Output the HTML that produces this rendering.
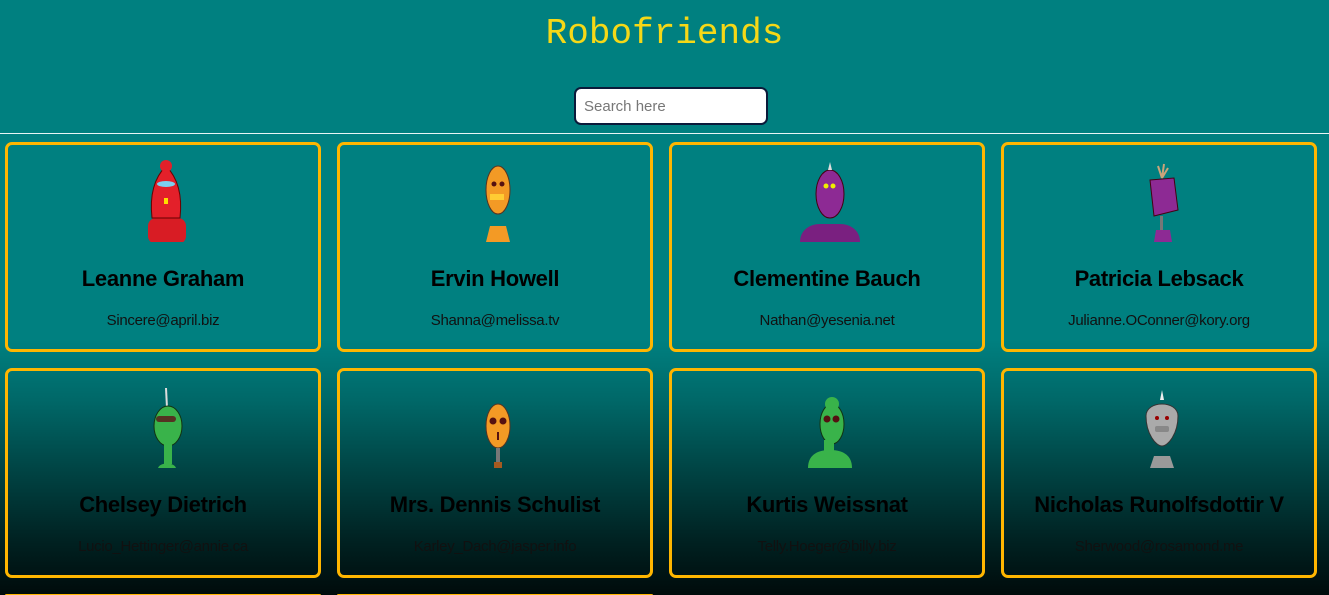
<!DOCTYPE html>
<html><head><meta charset="utf-8"><style>
*{box-sizing:border-box;margin:0;padding:0}
html,body{width:1329px;height:595px;overflow:hidden}
body{background:linear-gradient(to bottom,#008080 0,#008080 340px,#006868 400px,#004444 470px,#002222 540px,#000b0b 595px);font-family:"Liberation Sans",sans-serif;position:relative}
h1{position:absolute;top:13px;left:0;width:1329px;text-align:center;font-family:"Liberation Mono",monospace;font-weight:normal;font-size:36px;color:#f5d817;letter-spacing:0}
.search{position:absolute;left:574px;top:87px;width:194px;height:38px;background:#fff;border:2px solid #0b1a3a;border-radius:7px;font-size:15px;color:#777;padding:9px 8px}
.line{position:absolute;left:0;top:133px;width:1329px;height:1px;background:#e8f5f5}
.card{position:absolute;width:316px;height:210px;border:3px solid #ffb600;border-radius:7px;text-align:center}
.card svg{position:absolute;left:108px;top:15px}
.card .n{position:absolute;top:121px;left:0;width:100%;font-size:22px;font-weight:bold;color:#000;letter-spacing:-0.3px}
.card .e{position:absolute;top:167px;left:0;width:100%;font-size:15px;color:#111;letter-spacing:-0.3px}
</style></head><body>
<h1>Robofriends</h1>
<div class="search">Search here</div>
<div class="line"></div>

<div class="card" style="left:5px;top:142px"><svg width="100" height="82"><rect x="32" y="58" width="38" height="26" rx="8" fill="#d81c24"/><path d="M50 6 C36 20 34 40 36 58 L64 58 C66 40 64 20 50 6Z" fill="#e3202a" stroke="#600" /><circle cx="50" cy="6" r="6" fill="#e3202a"/><ellipse cx="50" cy="24" rx="9" ry="3" fill="#7cd0f0"/><rect x="48" y="38" width="4" height="6" fill="#fd0"/></svg><div class="n">Leanne Graham</div><div class="e">Sincere@april.biz</div></div>

<div class="card" style="left:337px;top:142px"><svg width="100" height="82"><ellipse cx="50" cy="30" rx="12" ry="24" fill="#f39a25" stroke="#532"/><circle cx="46" cy="24" r="2.5" fill="#511"/><circle cx="54" cy="24" r="2.5" fill="#511"/><rect x="42" y="34" width="14" height="6" fill="#fc3"/><path d="M38 82 L42 66 L58 66 L62 82Z" fill="#f39a25"/></svg><div class="n">Ervin Howell</div><div class="e">Shanna@melissa.tv</div></div>

<div class="card" style="left:669px;top:142px"><svg width="100" height="82"><path d="M20 82 C20 70 30 64 40 64 L60 64 C70 64 80 70 80 82Z" fill="#7a2080"/><ellipse cx="50" cy="34" rx="14" ry="24" fill="#8d2a94" stroke="#401"/><path d="M48 10 L50 2 L52 10Z" fill="#ddd"/><circle cx="46" cy="26" r="2.5" fill="#ee0"/><circle cx="53" cy="26" r="2.5" fill="#ee0"/></svg><div class="n">Clementine Bauch</div><div class="e">Nathan@yesenia.net</div></div>

<div class="card" style="left:1001px;top:142px"><svg width="100" height="82"><path d="M38 20 L62 18 L66 50 L42 56Z" fill="#8d2a94" stroke="#401"/><path d="M50 18 L46 6 M50 18 L52 4 M50 18 L56 8" stroke="#c9a47a" stroke-width="2"/><rect x="48" y="56" width="3" height="14" fill="#777"/><path d="M42 82 L44 70 L58 70 L60 82Z" fill="#8d2a94"/></svg><div class="n">Patricia Lebsack</div><div class="e">Julianne.OConner@kory.org</div></div>

<div class="card" style="left:5px;top:368px"><svg width="100" height="82"><path d="M50 2 L51 22" stroke="#ddd" stroke-width="2"/><ellipse cx="52" cy="40" rx="14" ry="20" fill="#39b34a" stroke="#131"/><rect x="40" y="30" width="20" height="6" rx="3" fill="#532"/><rect x="48" y="56" width="8" height="22" fill="#39b34a"/><path d="M42 82 C44 76 58 76 60 82Z" fill="#39b34a"/></svg><div class="n">Chelsey Dietrich</div><div class="e">Lucio_Hettinger@annie.ca</div></div>

<div class="card" style="left:337px;top:368px"><svg width="100" height="82"><ellipse cx="50" cy="40" rx="12" ry="22" fill="#f39a25" stroke="#532"/><circle cx="45" cy="35" r="3.5" fill="#511"/><circle cx="55" cy="35" r="3.5" fill="#511"/><rect x="49" y="46" width="2" height="8" fill="#511"/><rect x="48" y="62" width="4" height="14" fill="#777"/><rect x="46" y="76" width="8" height="6" fill="#a55a20"/></svg><div class="n">Mrs. Dennis Schulist</div><div class="e">Karley_Dach@jasper.info</div></div>

<div class="card" style="left:669px;top:368px"><svg width="100" height="82"><path d="M28 82 C28 70 36 64 50 64 C64 64 72 70 72 82Z" fill="#39b34a"/><ellipse cx="52" cy="38" rx="12" ry="20" fill="#39b34a" stroke="#131"/><circle cx="52" cy="18" r="7" fill="#39b34a"/><circle cx="47" cy="33" r="3.5" fill="#511"/><circle cx="56" cy="33" r="3.5" fill="#511"/><rect x="44" y="54" width="10" height="18" fill="#39b34a"/></svg><div class="n">Kurtis Weissnat</div><div class="e">Telly.Hoeger@billy.biz</div></div>

<div class="card" style="left:1001px;top:368px"><svg width="100" height="82"><path d="M48 14 L50 4 L52 14Z" fill="#eee"/><path d="M34 30 C34 14 66 14 66 30 C66 48 56 60 50 60 C44 60 34 48 34 30Z" fill="#aaa" stroke="#333"/><circle cx="45" cy="32" r="2" fill="#900"/><circle cx="55" cy="32" r="2" fill="#900"/><rect x="43" y="40" width="14" height="6" rx="2" fill="#888"/><path d="M38 82 L42 70 L58 70 L62 82Z" fill="#999"/></svg><div class="n">Nicholas Runolfsdottir V</div><div class="e">Sherwood@rosamond.me</div></div>

<div class="card" style="left:5px;top:594px;height:1px;border-bottom:none"></div>
<div class="card" style="left:337px;top:594px;height:1px;border-bottom:none"></div>
</body></html>
